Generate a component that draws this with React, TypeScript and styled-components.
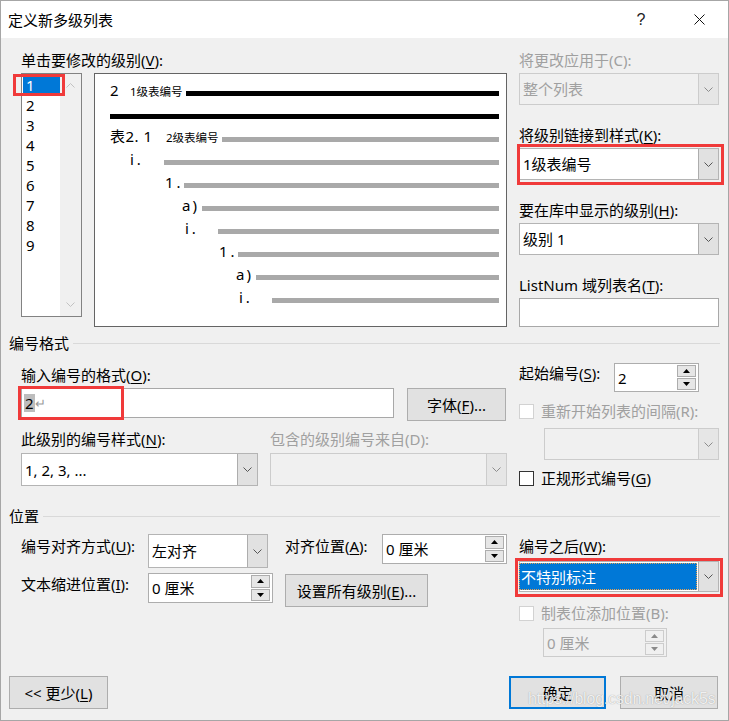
import React from "react";
import styled, { createGlobalStyle } from "styled-components";

const GlobalStyle = createGlobalStyle`
  html, body { margin: 0; padding: 0; background: #ffffff; }
  body {
    font-family: "Noto Sans", "Noto Sans CJK SC", sans-serif;
    font-size: 15px;
    line-height: 20px;
    color: #000000;
  }
  *, *::before, *::after { box-sizing: border-box; }
`;

const GRAY_TEXT = "#a0a0a0";
const BLUE = "#0078d7";
const RED = "#f03a3a";

const Window = styled.div`
  position: relative;
  width: 729px;
  height: 721px;
  border: 1px solid #a6a6a6;
  background: #f0f0f0;
  display: flex;
  flex-direction: column;
  overflow: hidden;
`;

const TitleBar = styled.div`
  height: 37px;
  flex: none;
  background: #ffffff;
  display: flex;
  align-items: center;
  padding-left: 7px;
`;

const TitleText = styled.div`
  flex: 1;
  font-size: 15px;
`;

const TitleButton = styled.div`
  width: 58px;
  height: 37px;
  display: flex;
  align-items: center;
  justify-content: center;
  font-family: "Liberation Sans", sans-serif;
  font-size: 16px;
  color: #222222;
`;

const Body = styled.div`
  flex: 1;
  display: flex;
  flex-direction: column;
  padding: 12px 8px 12px 8px;
`;

const TwoCol = styled.div<{ $mt?: number }>`
  display: grid;
  grid-template-columns: 486px 200px;
  column-gap: 12px;
  padding-left: 12px;
  margin-top: ${(p) => p.$mt ?? 0}px;
`;

const Stack = styled.div<{ $gap?: number; $pt?: number }>`
  display: flex;
  flex-direction: column;
  align-items: flex-start;
  gap: ${(p) => p.$gap ?? 0}px;
  padding-top: ${(p) => p.$pt ?? 0}px;
`;

const Row = styled.div<{ $gap?: number; $mt?: number; $ml?: number }>`
  display: flex;
  align-items: flex-start;
  gap: ${(p) => p.$gap ?? 0}px;
  margin-top: ${(p) => p.$mt ?? 0}px;
  margin-left: ${(p) => p.$ml ?? 0}px;
`;

const Label = styled.div<{ $disabled?: boolean; $w?: number; $mt?: number }>`
  height: 20px;
  line-height: 20px;
  white-space: nowrap;
  width: ${(p) => (p.$w ? `${p.$w}px` : "auto")};
  margin-top: ${(p) => p.$mt ?? 0}px;
  color: ${(p) => (p.$disabled ? GRAY_TEXT : "#000000")};
`;

const Key = styled.span`
  text-decoration: underline;
  text-underline-offset: 2px;
`;

const SectionHeader = styled.div<{ $mt: number }>`
  display: flex;
  align-items: center;
  gap: 4px;
  height: 20px;
  margin-top: ${(p) => p.$mt}px;
`;

const SectionLine = styled.div`
  flex: 1;
  height: 1px;
  background: #d9d9d9;
`;

/* ---------- level list ---------- */

const LevelBox = styled.div`
  position: relative;
  width: 61px;
  height: 244px;
  border: 1px solid #828282;
  background: #ffffff;
  display: flex;
`;

const LevelItems = styled.div`
  width: 38px;
  padding-top: 3px;
  display: flex;
  flex-direction: column;
  gap: 4px;
`;

const LevelItem = styled.div<{ $selected?: boolean }>`
  height: 16px;
  line-height: 16px;
  margin-left: 1px;
  padding-left: 3px;
  background: ${(p) => (p.$selected ? BLUE : "transparent")};
  color: ${(p) => (p.$selected ? "#ffffff" : "#000000")};
`;

const ScrollTrack = styled.div`
  width: 21px;
  background: #f0f0f0;
  display: flex;
  flex-direction: column;
  align-items: center;
  justify-content: space-between;
  padding: 9px 0 9px 0;
`;

const RedFrame = styled.div<{ $l: number; $t: number; $w: number; $h: number }>`
  position: absolute;
  left: ${(p) => p.$l}px;
  top: ${(p) => p.$t}px;
  width: ${(p) => p.$w}px;
  height: ${(p) => p.$h}px;
  border: 3px solid ${RED};
  pointer-events: none;
`;

const Marked = styled.div`
  position: relative;
`;

/* ---------- preview ---------- */

const Preview = styled.div`
  width: 413px;
  height: 254px;
  border: 1px solid #646464;
  background: #ffffff;
  padding: 8px 7px 0 15px;
`;

const PreviewRow = styled.div`
  display: flex;
  align-items: center;
  height: 23px;
`;

const Marker = styled.div<{ $w: number; $indent: number }>`
  width: ${(p) => p.$w}px;
  flex: none;
  align-self: flex-start;
  display: flex;
  align-items: baseline;
  padding-left: ${(p) => p.$indent}px;
  line-height: 16px;
  padding-top: 0px;
  white-space: nowrap;
`;

const Num = styled.span<{ $w?: number; $ls?: number }>`
  display: inline-block;
  min-width: ${(p) => p.$w ?? 0}px;
  letter-spacing: ${(p) => p.$ls ?? 0}px;
  font-size: 15px;
`;

const Sub = styled.span`
  font-size: 11.5px;
`;

const Bar = styled.div<{ $dark?: boolean }>`
  flex: 1;
  height: 5px;
  background: ${(p) => (p.$dark ? "#000000" : "#a9a9a9")};
`;

/* ---------- controls ---------- */

const ComboBox = styled.div<{ $w?: number; $h?: number; $disabled?: boolean }>`
  width: ${(p) => (p.$w ? `${p.$w}px` : "100%")};
  height: ${(p) => p.$h ?? 32}px;
  display: flex;
  border: 1px solid ${(p) => (p.$disabled ? "#cccccc" : "#b4b4b4")};
  background: ${(p) => (p.$disabled ? "#f0f0f0" : "#ffffff")};
  color: ${(p) => (p.$disabled ? GRAY_TEXT : "#000000")};
`;

const ComboField = styled.div`
  flex: 1;
  display: flex;
  align-items: center;
  padding-left: 3px;
  white-space: nowrap;
  overflow: hidden;
`;

const ComboSelected = styled.div`
  flex: 1;
  align-self: stretch;
  margin: 1px 1px 1px -1px;
  padding-left: 2px;
  display: flex;
  align-items: center;
  background: ${BLUE};
  color: #ffffff;
  outline: 1px dotted #e8a050;
  outline-offset: -1px;
`;

const ComboButton = styled.div<{ $disabled?: boolean }>`
  width: 20px;
  flex: none;
  display: flex;
  align-items: center;
  justify-content: center;
  background: ${(p) => (p.$disabled ? "#e6e6e6" : "#e1e1e1")};
  border-left: 1px solid ${(p) => (p.$disabled ? "#cccccc" : "#adadad")};
`;

const TextInput = styled.div<{ $w?: number; $h: number }>`
  width: ${(p) => (p.$w ? `${p.$w}px` : "100%")};
  height: ${(p) => p.$h}px;
  border: 1px solid #a8a8a8;
  background: #ffffff;
  display: flex;
  align-items: center;
  padding-left: 2px;
`;

const SelectedChar = styled.span`
  background: #bdbdbd;
  line-height: 18px;
  padding: 0 1px;
`;

const ParaMark = styled.span`
  color: #9a9a9a;
  font-size: 13px;
`;

const SpinBox = styled.div<{ $w: number; $h: number; $disabled?: boolean }>`
  width: ${(p) => p.$w}px;
  height: ${(p) => p.$h}px;
  display: flex;
  border: 1px solid ${(p) => (p.$disabled ? "#cccccc" : "#adadad")};
  background: ${(p) => (p.$disabled ? "#f0f0f0" : "#ffffff")};
  color: ${(p) => (p.$disabled ? GRAY_TEXT : "#000000")};
`;

const SpinValue = styled.div`
  flex: 1;
  display: flex;
  align-items: center;
  padding-left: 3px;
  white-space: nowrap;
`;

const SpinButtons = styled.div`
  width: 22px;
  padding: 1px 2px 1px 1px;
  display: flex;
  flex-direction: column;
  gap: 1px;
`;

const SpinButton = styled.div<{ $disabled?: boolean }>`
  flex: 1;
  display: flex;
  align-items: center;
  justify-content: center;
  background: ${(p) => (p.$disabled ? "#f0f0f0" : "#e6e6e6")};
  border: 1px solid ${(p) => (p.$disabled ? "#cccccc" : "#adadad")};
`;

const Button = styled.button<{ $w: number; $h?: number; $primary?: boolean; $mt?: number }>`
  width: ${(p) => p.$w}px;
  height: ${(p) => p.$h ?? 33}px;
  margin-top: ${(p) => p.$mt ?? 0}px;
  padding: 0;
  font-family: inherit;
  font-size: 15px;
  color: #000000;
  background: #e1e1e1;
  border: ${(p) => (p.$primary ? `2px solid ${BLUE}` : "1px solid #adadad")};
  white-space: nowrap;
`;

const CheckRow = styled.div<{ $mt?: number; $disabled?: boolean }>`
  display: flex;
  align-items: center;
  gap: 7px;
  height: 20px;
  margin-top: ${(p) => p.$mt ?? 0}px;
  color: ${(p) => (p.$disabled ? GRAY_TEXT : "#000000")};
  white-space: nowrap;
`;

const CheckBox = styled.div<{ $disabled?: boolean }>`
  width: 15px;
  height: 15px;
  border: 1px solid ${(p) => (p.$disabled ? "#d2d2d2" : "#333333")};
  background: #ffffff;
`;

const PositionGrid = styled.div`
  display: grid;
  grid-template-columns: 127px 125px 12px 97px 125px;
  grid-template-rows: 34px 34px;
  row-gap: 5px;
  align-items: start;
`;

const Cell = styled.div<{ $col: string }>`
  grid-column: ${(p) => p.$col};
`;

const Footer = styled.div`
  display: flex;
  align-items: flex-start;
  justify-content: space-between;
  margin-top: 19px;
  padding-right: 2px;
`;

const FooterRight = styled.div`
  display: flex;
  gap: 14px;
`;

const Watermark = styled.div`
  position: absolute;
  left: 527px;
  top: 688px;
  font-family: "Liberation Sans", sans-serif;
  font-size: 16px;
  letter-spacing: -0.2px;
  color: rgba(255, 255, 255, 0.85);
  text-shadow: 0 0 1px rgba(80, 80, 80, 0.55);
  pointer-events: none;
`;

/* ---------- icons ---------- */

const ChevronDown = ({ color = "#555555" }: { color?: string }) => (
  <svg width="9" height="5" viewBox="0 0 9 5">
    <polyline points="0.5,0.5 4.5,4.5 8.5,0.5" fill="none" stroke={color} strokeWidth="1" />
  </svg>
);

const ChevronUp = ({ color = "#c2c2c2" }: { color?: string }) => (
  <svg width="9" height="5" viewBox="0 0 9 5">
    <polyline points="0.5,4.5 4.5,0.5 8.5,4.5" fill="none" stroke={color} strokeWidth="1" />
  </svg>
);

const Triangle = ({ up, color = "#000000" }: { up?: boolean; color?: string }) => (
  <svg width="7" height="4" viewBox="0 0 7 4">
    <polygon points={up ? "0,4 3.5,0 7,4" : "0,0 3.5,4 7,0"} fill={color} />
  </svg>
);

const CloseIcon = () => (
  <svg width="11" height="11" viewBox="0 0 11 11">
    <line x1="0.5" y1="0.5" x2="10.5" y2="10.5" stroke="#111" strokeWidth="1" />
    <line x1="10.5" y1="0.5" x2="0.5" y2="10.5" stroke="#111" strokeWidth="1" />
  </svg>
);

/* ---------- small composites ---------- */

function Combo(props: {
  value?: React.ReactNode;
  w?: number;
  h?: number;
  disabled?: boolean;
  selected?: boolean;
}) {
  const { value, w, h, disabled, selected } = props;
  return (
    <ComboBox $w={w} $h={h} $disabled={disabled}>
      {selected ? <ComboSelected>{value}</ComboSelected> : <ComboField>{value}</ComboField>}
      <ComboButton $disabled={disabled}>
        <ChevronDown color={disabled ? "#8c8c8c" : "#555555"} />
      </ComboButton>
    </ComboBox>
  );
}

function Spin(props: { value: string; w: number; h: number; disabled?: boolean }) {
  const { value, w, h, disabled } = props;
  const tri = disabled ? "#8a8a8a" : "#000000";
  return (
    <SpinBox $w={w} $h={h} $disabled={disabled}>
      <SpinValue>{value}</SpinValue>
      <SpinButtons>
        <SpinButton $disabled={disabled}>
          <Triangle up color={tri} />
        </SpinButton>
        <SpinButton $disabled={disabled}>
          <Triangle color={tri} />
        </SpinButton>
      </SpinButtons>
    </SpinBox>
  );
}

const levels = ["1", "2", "3", "4", "5", "6", "7", "8", "9"];

type PreviewLine = {
  num?: string;
  numW?: number;
  ls?: number;
  sub?: string;
  indent?: number;
  bar: number;
  dark?: boolean;
};

// x positions are measured from the preview's left text edge (110)
const previewLines: PreviewLine[] = [
  { num: "2", numW: 20, sub: "1级表编号", bar: 186, dark: true },
  { bar: 110, dark: true },
  { num: "表2. 1", numW: 56, ls: 0.5, sub: "2级表编号", bar: 222 },
  { num: "i.", ls: 3, indent: 130, bar: 164 },
  { num: "1.", ls: 3, indent: 165, bar: 184 },
  { num: "a)", ls: 2, indent: 182, bar: 202 },
  { num: "i.", ls: 3, indent: 185, bar: 218 },
  { num: "1.", ls: 3, indent: 219, bar: 238 },
  { num: "a)", ls: 2, indent: 236, bar: 256 },
  { num: "i.", ls: 3, indent: 239, bar: 272 },
];

export default function App() {
  return (
    <>
      <GlobalStyle />
      <Window>
        <TitleBar>
          <TitleText>定义新多级列表</TitleText>
          <TitleButton>?</TitleButton>
          <TitleButton>
            <CloseIcon />
          </TitleButton>
        </TitleBar>

        <Body>
          {/* level chooser + preview, and the style links on the right */}
          <TwoCol>
            <Stack>
              <Label>
                单击要修改的级别(<Key>V</Key>):
              </Label>
              <Row $gap={12} $mt={3}>
                <LevelBox>
                  <LevelItems>
                    {levels.map((l, i) => (
                      <LevelItem key={l} $selected={i === 0}>
                        {l}
                      </LevelItem>
                    ))}
                  </LevelItems>
                  <ScrollTrack>
                    <ChevronUp />
                    <ChevronDown color="#c2c2c2" />
                  </ScrollTrack>
                  <RedFrame $l={-9} $t={0} $w={52} $h={22} />
                </LevelBox>
                <Preview>
                  {previewLines.map((line, i) => (
                    <PreviewRow key={i}>
                      {line.bar > 110 && (
                        <Marker $w={line.bar - 110} $indent={(line.indent ?? 110) - 110}>
                          <Num $w={line.numW} $ls={line.ls}>
                            {line.num}
                          </Num>
                          {line.sub && <Sub>{line.sub}</Sub>}
                        </Marker>
                      )}
                      <Bar $dark={line.dark} />
                    </PreviewRow>
                  ))}
                </Preview>
              </Row>
            </Stack>

            <Stack $gap={20}>
              <Stack $gap={3} style={{ width: "100%" }}>
                <Label $disabled>将更改应用于(C):</Label>
                <Combo value="整个列表" disabled />
              </Stack>
              <Stack $gap={3} style={{ width: "100%" }}>
                <Label>
                  将级别链接到样式(<Key>K</Key>):
                </Label>
                <Marked style={{ width: "100%" }}>
                  <Combo value="1级表编号" />
                  <RedFrame $l={-2} $t={-4} $w={207} $h={41} />
                </Marked>
              </Stack>
              <Stack $gap={3} style={{ width: "100%" }}>
                <Label>
                  要在库中显示的级别(<Key>H</Key>):
                </Label>
                <Combo value="级别 1" />
              </Stack>
              <Stack $gap={3} style={{ width: "100%" }}>
                <Label>
                  ListNum 域列表名(<Key>T</Key>):
                </Label>
                <TextInput $h={29} />
              </Stack>
            </Stack>
          </TwoCol>

          <SectionHeader $mt={6}>
            编号格式
            <SectionLine />
          </SectionHeader>

          <TwoCol $mt={10}>
            <Stack $pt={2}>
              <Label>
                输入编号的格式(<Key>O</Key>):
              </Label>
              <Row $gap={13} $mt={3}>
                <Marked>
                  <TextInput $w={373} $h={30}>
                    <SelectedChar>2</SelectedChar>
                    <ParaMark>↵</ParaMark>
                  </TextInput>
                  <RedFrame $l={-3} $t={-2} $w={106} $h={34} />
                </Marked>
                <Button $w={99}>
                  字体(<Key>F</Key>)...
                </Button>
              </Row>
              <Row $gap={12} $mt={8}>
                <Label $w={237}>
                  此级别的编号样式(<Key>N</Key>):
                </Label>
                <Label $disabled>包含的级别编号来自(D):</Label>
              </Row>
              <Row $gap={12} $mt={4}>
                <Combo w={237} h={33} value="1, 2, 3, ..." />
                <Combo w={237} h={33} disabled />
              </Row>
            </Stack>

            <Stack>
              <Row>
                <Label $w={95}>
                  起始编号(<Key>S</Key>):
                </Label>
                <Spin value="2" w={85} h={29} />
              </Row>
              <CheckRow $mt={9} $disabled>
                <CheckBox $disabled />
                重新开始列表的间隔(R):
              </CheckRow>
              <Row $mt={7} $ml={25}>
                <Combo w={175} h={32} disabled />
              </Row>
              <CheckRow $mt={8}>
                <CheckBox />
                <span>
                  正规形式编号(<Key>G</Key>)
                </span>
              </CheckRow>
            </Stack>
          </TwoCol>

          <SectionHeader $mt={18}>
            位置
            <SectionLine />
          </SectionHeader>

          <TwoCol $mt={8}>
            <PositionGrid>
              <Cell $col="1">
                <Label $mt={2}>
                  编号对齐方式(<Key>U</Key>):
                </Label>
              </Cell>
              <Cell $col="2">
                <Combo w={120} h={34} value="左对齐" />
              </Cell>
              <Cell $col="4">
                <Label $mt={2}>
                  对齐位置(<Key>A</Key>):
                </Label>
              </Cell>
              <Cell $col="5">
                <Spin value="0 厘米" w={125} h={30} />
              </Cell>
              <Cell $col="1">
                <Label $mt={1}>
                  文本缩进位置(<Key>I</Key>):
                </Label>
              </Cell>
              <Cell $col="2">
                <Spin value="0 厘米" w={125} h={30} />
              </Cell>
              <Cell $col="4 / 6">
                <Button $w={143} $mt={1}>
                  设置所有级别(<Key>E</Key>)...
                </Button>
              </Cell>
            </PositionGrid>

            <Stack>
              <Label $mt={2}>
                编号之后(<Key>W</Key>):
              </Label>
              <Marked style={{ width: "100%", marginTop: 5 }}>
                <Combo h={31} value="不特别标注" selected />
                <RedFrame $l={-4} $t={-3} $w={208} $h={39} />
              </Marked>
              <CheckRow $mt={11} $disabled>
                <CheckBox $disabled />
                制表位添加位置(B):
              </CheckRow>
              <Row $mt={5} $ml={24}>
                <Spin value="0 厘米" w={124} h={29} disabled />
              </Row>
            </Stack>
          </TwoCol>

          <Footer>
            <Button $w={99}>
              {"<< 更少("}
              <Key>L</Key>)
            </Button>
            <FooterRight>
              <Button $w={97} $primary>
                确定
              </Button>
              <Button $w={98}>取消</Button>
            </FooterRight>
          </Footer>
        </Body>

        <Watermark>https://blog.csdn.net/jack5s</Watermark>
      </Window>
    </>
  );
}
